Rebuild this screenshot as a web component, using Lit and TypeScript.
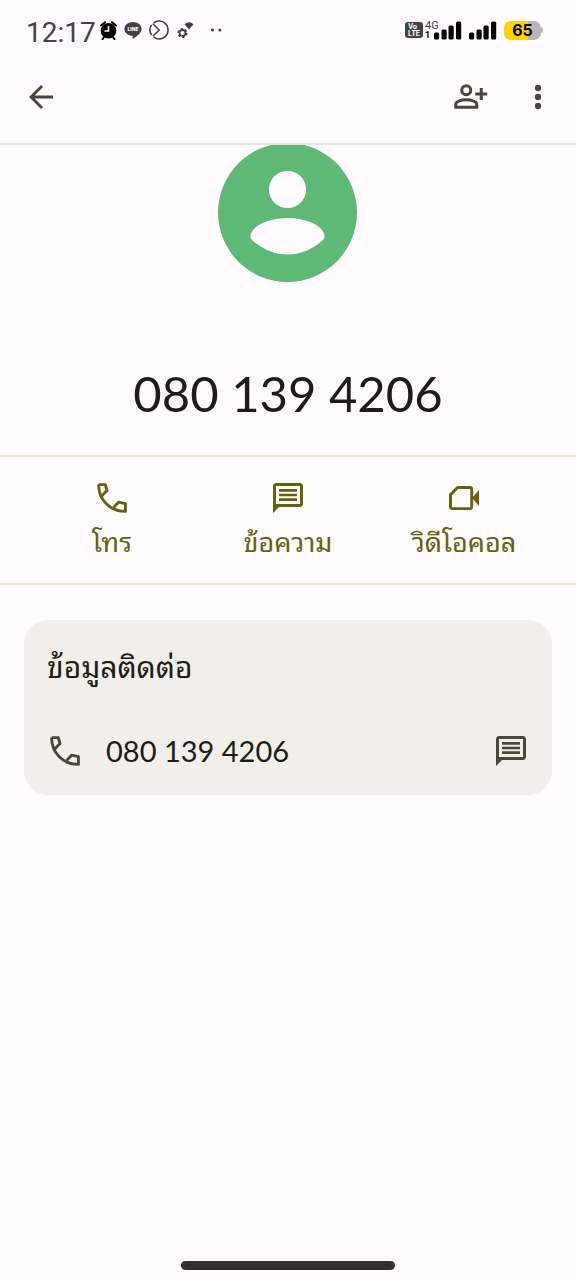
import { LitElement, html, css, svg } from "lit";
import { customElement } from "lit/decorators.js";

const phoneIcon = html`<svg class="icon" width="36" height="36" viewBox="-3 -3 36 36" aria-hidden="true">
  <path fill="none" stroke="currentColor" stroke-width="2.9" stroke-linejoin="round"
    d="M1.6 1.6H8.3L10 7.6 5 12.8M1.6 1.6C1.6 17 13 28.4 28.4 28.4V20.6L21.6 19.2 16.8 24.2"/>
</svg>`;

const messageIcon = html`<svg class="icon" width="36" height="36" viewBox="0 0 24 24" aria-hidden="true">
  <path fill="currentColor" fill-rule="evenodd"
    d="M4 2h16c1.1 0 2 .9 2 2v12c0 1.1-.9 2-2 2H6l-4 4V4c0-1.1.9-2 2-2zm0 2v12h16V4H4zm2 2h12v1.8H6zm0 3.1h12v1.8H6zm0 3.1h12V14H6z"/>
</svg>`;

const videoIcon = html`<svg class="icon" width="36" height="36" viewBox="-3 -3 36 36" aria-hidden="true">
  <path fill="none" stroke="currentColor" stroke-width="2.9" stroke-linejoin="round"
    d="M8.6 4.5H21Q22.7 4.5 22.7 6.2V24Q22.7 25.6 21 25.6H3.2Q1.5 25.6 1.5 24V11.6Z"/>
  <path fill="currentColor" d="M23 15 30 7v16z"/>
</svg>`;

const bars = html`<svg width="28" height="19" viewBox="0 0 28 19" aria-hidden="true">
  ${[[0, 7], [7.5, 10], [14.5, 14], [22, 18]].map(
    ([x, h]) => svg`<rect x=${x} y=${18.5 - h} width="5.2" height=${h} rx="1.5" fill="#000"/>`
  )}
</svg>`;

@customElement("status-bar")
class StatusBar extends LitElement {
  static styles = css`
    :host { display: flex; align-items: center; height: 60px; padding: 0 33px 0 26px; box-sizing: border-box; color: #424246; font-family: Roboto, sans-serif; }
    .time { font-size: 28px; line-height: 32px; padding-top: 6px; }
    .notices { display: flex; align-items: center; gap: 7px; margin-left: 4px; flex: 1; }
    .dots { margin-left: 9px; }
    .signals { display: flex; align-items: center; }
    .volte { display: grid; place-content: center; width: 18px; height: 16px; border-radius: 3px; background: #424246; color: #fff; font: 700 7px/7px Inter, sans-serif; }
    .network { display: flex; flex-direction: column; width: 14px; margin: 0 -5px 0 2px; font-size: 11px; line-height: 10px; }
    .sim { font-size: 9px; font-weight: 700; line-height: 9px; color: #000; }
    .signals svg { margin-right: 7px; }
    .battery { width: 37px; border-radius: 7px; background: linear-gradient(90deg, #fdd20a 64%, #b7b7bb 64%); color: #000; font: 700 16px/19px Inter, sans-serif; text-align: center; }
    .tip { width: 2px; height: 6px; border-radius: 0 2px 2px 0; background: #b7b7bb; }
  `;
  render() {
    return html`
      <span class="time">12:17</span>
      <div class="notices">
        <svg width="17" height="19" viewBox="0 0 17 19" aria-hidden="true">
          <path d="M1 4.5 5 1.2M16 4.5 12 1.2M4 16l-1.500 2.200M13 16l1.500 2.200" stroke="#000" stroke-width="2" stroke-linecap="round"/>
          <circle cx="8.5" cy="9.800" r="7.800" fill="#000"/>
          <path d="M8.5 5v5H4.5" fill="none" stroke="#fff" stroke-width="1.500"/>
        </svg>
        <svg width="18" height="18" viewBox="0 0 18 18" aria-hidden="true">
          <path d="M9 1c4.800 0 8.600 3 8.600 7 0 3.600-4.600 7.200-8.300 9.700-.6.300-.8 0-.7-.6l.2-2C4 14.700.4 11.800.4 8 .4 4 4.200 1 9 1z" fill="#424246"/>
          <text x="9" y="10" text-anchor="middle" font-family="Inter, sans-serif" font-size="5" font-weight="800" fill="#fff">LINE</text>
        </svg>
        <svg width="20" height="20" viewBox="0 0 20 20" fill="none" stroke="#424246" stroke-width="1.600" aria-hidden="true">
          <path d="M4.600 2.900A9 9 0 1 1 4.600 17.100M2.600 4.900A9 9 0 0 0 2.600 15.100"/>
          <path d="M3.800 3.800 10.200 10 3.800 16.200"/>
        </svg>
        <svg width="18" height="18" viewBox="0 0 18 18" aria-hidden="true">
          <path d="M8.500 3.200Q13 -.8 17.500 3.200L13 8.500z" fill="#424246"/>
          <circle cx="6.500" cy="12" r="3" fill="none" stroke="#424246" stroke-width="1.800"/>
          <circle cx="6.500" cy="12" r="4.300" fill="none" stroke="#424246" stroke-width="1.600" stroke-dasharray="2.200 2.300"/>
        </svg>
        <svg class="dots" width="13" height="4" viewBox="0 0 13 4" fill="#424246" aria-hidden="true">
          <circle cx="2.500" cy="2" r="1.500"/><circle cx="9.800" cy="2" r="1.500"/>
        </svg>
      </div>
      <div class="signals">
        <span class="volte"><span>Vo</span><span>LTE</span></span>
        <span class="network"><span>4G</span><span class="sim">1</span></span>
        ${bars}${bars}
        <span class="battery">65</span><span class="tip"></span>
      </div>
    `;
  }
}

@customElement("app-root")
class AppRoot extends LitElement {
  static styles = css`
    :host { display: flex; flex-direction: column; min-height: 100vh; background: #fffbff; color: #1d1c17; font-family: Lato, "Noto Sans Thai Looped", "Noto Sans Thai", "Noto Sans", sans-serif; }
    button { display: flex; align-items: center; border: 0; padding: 0; background: none; color: inherit; font: inherit; cursor: pointer; }
    .icon { display: block; flex: none; }
    .appbar { display: flex; align-items: center; height: 85px; padding: 0 20px 10px 23px; box-sizing: border-box; gap: 32px; color: #49473a; border-bottom: 2px solid #ebe6d9; }
    .back { margin-right: auto; }
    .profile { display: flex; flex-direction: column; align-items: center; border-bottom: 2px solid #ebe6d9; }
    .avatar { display: block; margin-top: -2px; clip-path: inset(2px 0 0 0); }
    .number { margin: 78px 0 30px; font-size: 49px; line-height: 64px; font-weight: 400; }
    .actions { display: grid; grid-template-columns: repeat(3, 1fr); padding: 23px 24px 21px; border-bottom: 2px solid #ebe6d9; color: #67600f; }
    .action { flex-direction: column; gap: 6px; font-size: 27px; line-height: 40px; }
    .card { margin: 35px 24px 0; padding: 24px; border-radius: 24px; background: #f2eeea; }
    .title { margin: 0 -1px; font-size: 30px; line-height: 44px; font-weight: 400; }
    .row { display: flex; align-items: center; margin: 42px -1px 0; color: #49473a; }
    .call { gap: 23px; flex: 1; text-align: left; }
    .phone { color: #1d1c17; font-size: 29px; line-height: 41px; }
    .home { width: 37%; height: 9px; margin: auto auto 10px; border-radius: 5px; background: #303033; }
  `;
  render() {
    return html`
      <status-bar></status-bar>
      <header class="appbar">
        <button class="back" aria-label="กลับ">
          <svg class="icon" width="36" height="36" viewBox="0 0 24 24" fill="none" stroke="currentColor" stroke-width="1.900" aria-hidden="true">
            <path d="M20 12H5.500M12.700 4.700 5.400 12l7.300 7.300"/>
          </svg>
        </button>
        <button aria-label="เพิ่มรายชื่อ">
          <svg class="icon" width="36" height="36" viewBox="0 0 24 24" fill="none" stroke="currentColor" stroke-width="2" aria-hidden="true">
            <circle cx="9.500" cy="7.500" r="3"/>
            <path d="M2.500 18.800v-1.800C2.500 14.700 6.500 13.800 9.500 13.800s7 .9 7 3.200V18.800z"/>
            <path d="M19.500 6v8M15.500 10h8"/>
          </svg>
        </button>
        <button aria-label="ตัวเลือกเพิ่มเติม">
          <svg class="icon" width="36" height="36" viewBox="0 0 24 24" fill="currentColor" aria-hidden="true">
            <circle cx="12" cy="6" r="2.100"/><circle cx="12" cy="12" r="2.100"/><circle cx="12" cy="18" r="2.100"/>
          </svg>
        </button>
      </header>
      <main>
        <section class="profile">
          <svg class="avatar" width="140" height="140" viewBox="0 0 140 140" aria-hidden="true">
            <circle cx="69.500" cy="69.500" r="69.500" fill="#5db975"/>
            <circle cx="69.500" cy="46.500" r="18.600" fill="#fffbff"/>
            <path d="M32.500 92.500C34 82 52 75 69.500 75S105 82 106.500 92.500Q107 95 105 97C95 106 83 111.500 69.500 111.500S44 106 34 97Q32 95 32.500 92.500z" fill="#fffbff"/>
          </svg>
          <h1 class="number">080 139 4206</h1>
        </section>
        <nav class="actions">
          <button class="action">${phoneIcon}<span>โทร</span></button>
          <button class="action">${messageIcon}<span>ข้อความ</span></button>
          <button class="action">${videoIcon}<span>วิดีโอคอล</span></button>
        </nav>
        <section class="card">
          <h2 class="title">ข้อมูลติดต่อ</h2>
          <div class="row">
            <button class="call">${phoneIcon}<span class="phone">080 139 4206</span></button>
            <button aria-label="ข้อความ">${messageIcon}</button>
          </div>
        </section>
      </main>
      <div class="home"></div>
    `;
  }
}
